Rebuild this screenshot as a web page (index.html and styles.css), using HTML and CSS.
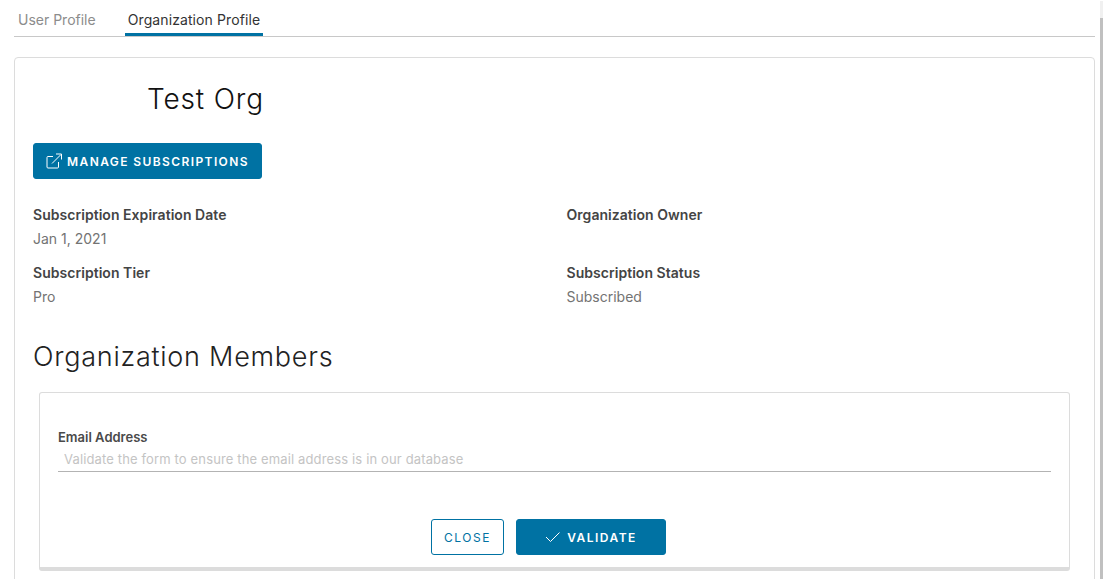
FILE: index.html
```html
<!DOCTYPE html>
<html>
<head>
    <title>Organization Profile</title>
    <link rel="stylesheet" href="styles.css">
</head>
<body>
    <div class="page">
        <div class="content">
            <ul class="tabs">
                <li class="tab">User Profile</li>
                <li class="tab active">Organization Profile</li>
            </ul>
            <div class="card">
                <h1 class="org-name">Test Org</h1>
                <button class="btn btn-primary btn-manage" type="button">
                    <svg class="icon" width="16" height="16" viewBox="0 0 16 16" fill="none" stroke="currentColor" stroke-width="1">
                        <path d="M12.5 9v5a1 1 0 0 1-1 1H2a1 1 0 0 1-1-1V4.500a1 1 0 0 1 1-1h5"/>
                        <path d="M6 10.500L15 1.500M10 1h5.500v5.500"/>
                    </svg>
                    Manage Subscriptions
                </button>
                <div class="details">
                    <div class="detail">
                        <div class="detail-label">Subscription Expiration Date</div>
                        <div class="detail-value">Jan 1, 2021</div>
                    </div>
                    <div class="detail">
                        <div class="detail-label">Organization Owner</div>
                    </div>
                    <div class="detail">
                        <div class="detail-label">Subscription Tier</div>
                        <div class="detail-value">Pro</div>
                    </div>
                    <div class="detail">
                        <div class="detail-label">Subscription Status</div>
                        <div class="detail-value">Subscribed</div>
                    </div>
                </div>
                <h2 class="section-title">Organization Members</h2>
                <form class="member-form">
                    <label class="field-label" for="email">Email Address</label>
                    <input class="field-input" id="email" type="text" placeholder="Validate the form to ensure the email address is in our database">
                    <div class="form-actions">
                        <button class="btn btn-outline" type="button">Close</button>
                        <button class="btn btn-primary btn-validate" type="button">
                            <svg class="icon" width="16" height="12" viewBox="0 0 16 12" fill="none" stroke="currentColor" stroke-width="1">
                                <path d="M1 6l4.500 4.500L14.500 1.500"/>
                            </svg>
                            Validate
                        </button>
                    </div>
                </form>
            </div>
        </div>
        <div class="scrollbar"><div class="scroll-thumb"></div></div>
    </div>
</body>
</html>
```
FILE: styles.css
```css
html, body {
    height: 100%;
}
body {
    margin: 0;
    overflow: hidden;
    background: #fff;
    font-family: Inter, "Liberation Sans", sans-serif;
    color: #565656;
}
.page {
    display: flex;
    height: 579px;
    overflow: hidden;
}
.content {
    width: 1081px;
    margin-left: 14px;
}
.tabs {
    display: flex;
    gap: 32px;
    list-style: none;
    margin: 0;
    padding: 0 0 0 4px;
    height: 36px;
    border-bottom: 1px solid #c8c8c8;
}
.tab {
    height: 33px;
    padding-top: 11px;
    box-sizing: border-box;
    font-size: 14px;
    color: #8c8c8c;
}
.tab.active {
    height: 36px;
    margin-left: -3px;
    padding: 11px 3px 0;
    color: #333;
    letter-spacing: 0.1px;
    border-bottom: 3px solid #0072a3;
}
.card {
    margin-top: 20px;
    height: 560px;
    padding: 0 24px 0 18px;
    box-sizing: border-box;
    border: 1px solid #dcdcdc;
    border-radius: 4px;
}
.org-name {
    margin: 0;
    padding: 23px 0 0 114px;
    font-size: 28px;
    line-height: 36px;
    font-weight: 300;
    letter-spacing: 0.85px;
    color: #111;
}
.btn {
    display: inline-flex;
    align-items: center;
    justify-content: center;
    height: 36px;
    padding: 0;
    box-sizing: border-box;
    border-radius: 3px;
    font-family: inherit;
    font-size: 12px;
    font-weight: 600;
    letter-spacing: 1.4px;
    text-transform: uppercase;
}
.btn-primary {
    background: #0072a3;
    border: 1px solid #0072a3;
    color: #fff;
}
.btn-outline {
    width: 73px;
    background: #fff;
    border: 1px solid #0072a3;
    color: #0072a3;
    font-weight: 400;
    letter-spacing: 1.5px;
}
.btn-manage {
    width: 229px;
    margin-top: 26px;
    gap: 5px;
}
.btn-validate {
    width: 150px;
    gap: 6px;
    letter-spacing: 1.5px;
}
.details {
    display: grid;
    grid-template-columns: 533.5px 1fr;
    margin-top: 26px;
}
.detail {
    height: 58px;
}
.detail-label {
    font-size: 14px;
    line-height: 20px;
    font-weight: 600;
    letter-spacing: 0.04px;
    color: #444;
}
.detail-value {
    margin-top: 4px;
    font-size: 14px;
    line-height: 20px;
    color: #737373;
}
.section-title {
    margin: 0;
    padding-top: 18px;
    font-size: 27px;
    line-height: 36px;
    font-weight: 300;
    letter-spacing: 0.75px;
    color: #222;
}
.member-form {
    margin: 17px 0 0 6px;
    width: 1031px;
    height: 179px;
    padding: 36px 18px 0;
    box-sizing: border-box;
    border: 1px solid #dcdcdc;
    border-bottom: 4px solid #dcdcdc;
    border-radius: 3px;
}
.field-label {
    display: block;
    font-size: 13px;
    line-height: 16px;
    font-weight: 600;
    color: #4a4a4a;
}
.field-input {
    display: block;
    width: 100%;
    height: 26px;
    margin-top: 1px;
    padding: 0 6px;
    box-sizing: border-box;
    border: none;
    border-bottom: 1px solid #b3b3b3;
    outline: none;
    font-family: inherit;
    font-size: 13px;
    letter-spacing: 0.14px;
}
.field-input::placeholder {
    color: #c4c4c4;
}
.form-actions {
    display: flex;
    justify-content: center;
    gap: 12px;
    margin-top: 47px;
    padding-right: 12px;
}
.scrollbar {
    width: 3px;
    height: 578px;
    margin: 1px 0 0 5px;
    background: #f0f0f0;
}
.scroll-thumb {
    height: 100%;
    margin-top: 17px;
    background: #c0c0c0;
}
```
